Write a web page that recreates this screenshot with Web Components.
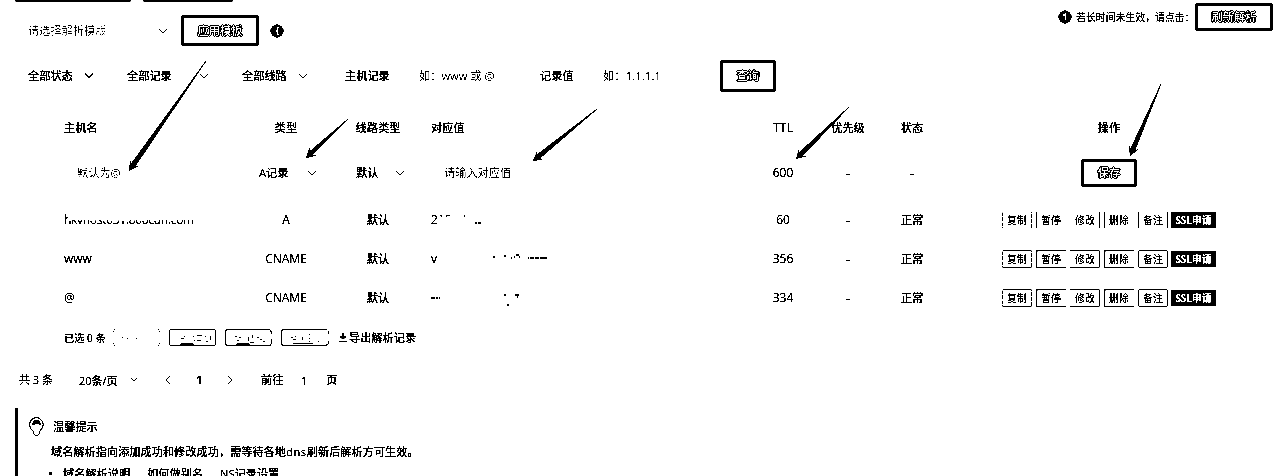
<!DOCTYPE html>
<html lang="zh-CN">
<head>
<meta charset="utf-8">
<title>域名解析</title>
<style>
html,body{margin:0;background:#fff;overflow:hidden}
body{width:1280px;height:476px;font:500 11.2px/16px "Open Sans","Noto Sans CJK SC",sans-serif;color:#000}
</style>
</head>
<body>
<dns-page></dns-page>
<script>
function define(name, html, setup) {
  customElements.define(name, class extends HTMLElement {
    connectedCallback() {
      if (this.shadowRoot) return;
      const root = this.attachShadow({mode: 'open'});
      root.innerHTML = typeof html === 'function' ? html(this) : html;
      if (setup) setup(this, root);
    }
  });
}

define('box-button', `<style>
:host{display:flex;box-sizing:border-box;align-items:center;justify-content:center;border:3px solid #000;border-radius:3px;font-size:11.2px;color:#fff;white-space:nowrap;
text-shadow:1px 0 #000,-1px 0 #000,0 1px #000,0 -1px #000}
</style><slot></slot>`);

define('chevron-icon', `<style>:host{display:block;width:10px;height:6px;flex:none}svg{display:block}:host([bold]) path{stroke-width:1.4}</style>
<svg width="10" height="6" viewBox="0 0 10 6"><path d="M1 .8 5 4.8 9 .8" fill="none" stroke="#000" stroke-width=".9"/></svg>`);

define('info-icon', e => `<style>:host{display:block;width:14px;height:14px;flex:none}svg{display:block}</style>
<svg width="14" height="14" viewBox="0 0 14 14"><circle cx="7" cy="7" r="6.5"/><path d="${e.hasAttribute('thin') ? 'M5 5h2.500v5.500M7.500 3v3' : 'M9 3.500H7.500v7H9M7.500 7H5.500'}" fill="none" stroke="#fff" stroke-width="1.700"/></svg>`);

define('tool-bar', `<style>
:host{display:flex;align-items:flex-start;height:60px;box-sizing:border-box}
.tabs{display:flex;gap:12px;padding-left:15px;height:2px}
.tabs i{background:#000;width:116px;border-radius:0 0 2px 2px}.tabs i+i{width:90px}
.left{width:1058px}
.row{display:flex;align-items:center;padding:13px 0 0 28px}
.ph{color:#868686;font-weight:400;width:130px}
chevron-icon{margin-right:13px}
.row box-button{width:78px;height:31px;margin-right:11px}
.right{display:flex;align-items:center;padding-top:3px}
.right span{font-size:9.9px;font-weight:400;margin-left:4px;width:119px;white-space:nowrap}
.right box-button{width:78px;height:28px}
</style>
<div class="left"><div class="tabs"><i></i><i></i></div>
<div class="row"><span class="ph">请选择解析模版</span><chevron-icon></chevron-icon><box-button>应用模板</box-button><info-icon></info-icon></div></div>
<div class="right"><info-icon thin></info-icon><span>若长时间未生效，请点击：</span><box-button>刷新解析</box-button></div>`);

define('filter-bar', `<style>
:host{display:grid;grid-template-columns:99px 115px 103px 74px 121px 63px 117px 56px;padding-left:28px;height:32px;align-items:center}
div{display:flex;align-items:center;gap:11px;white-space:nowrap}
.ph{color:#606060;font-weight:400}
box-button{height:32px}
</style>
<div>全部状态<chevron-icon bold></chevron-icon></div>
<div style="gap:27px">全部记录<chevron-icon></chevron-icon></div>
<div>全部线路<chevron-icon></chevron-icon></div>
<div>主机记录</div><div class="ph">如：www 或 @</div><div>记录值</div><div class="ph" style="color:#444;letter-spacing:.15px">如：1.1.1.1</div>
<box-button>查询</box-button>`);

define('table-row', `<style>
:host{display:grid;grid-template-columns:240px 92px 92px 327px 64px 66px 62px 332px;align-items:center;white-space:nowrap}
::slotted(*){text-align:center}
::slotted(:nth-child(1)){text-align:left;padding-left:64px}
::slotted(:nth-child(4)){text-align:left;padding-left:7px}
</style><slot></slot>`);

define('row-actions', `<style>
:host{display:flex;gap:4px;justify-content:center;font-size:9.9px;font-weight:400}
span{box-sizing:border-box;width:30px;height:18px;line-height:16px;border:1px solid #000;border-radius:2px}
span:nth-child(1),span:nth-child(4){border-left-color:transparent;border-radius:0 2px 2px 0}
span:nth-child(3),span:nth-child(5){border-right-color:transparent;border-radius:2px 0 0 2px}
span:nth-child(2){border-left-style:dashed;border-right-style:dashed}
:host([faint]) span{border-top-color:transparent;border-bottom-color:transparent}
b{width:45px;height:16px;line-height:16px;margin:1px 0 0 -1px;background:#000;color:#fff;border-radius:1px;-webkit-text-stroke:.3px #fff}
</style><span>复制</span><span>暂停</span><span>修改</span><span>删除</span><span>备注</span><b>SSL申请</b>`);

define('record-table', `<style>
:host{display:block;padding-top:20px}
.head{height:32px}
.edit{height:57px}
.rec{height:39.2px}
.rec:nth-of-type(3){margin-top:-1px}
.lat{font-size:12px}
.dash{font-size:13px;font-weight:600}
.ph{color:#686868;font-weight:400}
.sel{display:flex;align-items:center;justify-content:space-between}
box-button{width:56px;height:28px;margin:0 auto}
.cut{display:inline-block;letter-spacing:-.3px;clip-path:polygon(0 0,4px 0,4px 9px,100% 9px,100% 100%,0 100%)}
.top{display:inline-block;clip-path:polygon(0 0,100% 0,100% 5px,6px 5px,6px 100%,0 100%)}
svg{vertical-align:middle}
</style>
<table-row class="head"><span>主机名</span><span>类型</span><span>线路类型</span><span>对应值</span><span class="lat">TTL</span><span>优先级</span><span>状态</span><span>操作</span></table-row>
<table-row class="edit"><span class="ph"><span style="padding-left:13px">默认为@</span></span>
<div><div class="sel" style="margin:0 15px 0 19px">A记录<chevron-icon></chevron-icon></div></div>
<div><div class="sel" style="margin:0 19px 0 24px">默认<chevron-icon></chevron-icon></div></div>
<span class="ph"><span style="padding-left:13px">请输入对应值</span></span><span class="lat">600</span><span class="dash">-</span><span class="dash">-</span><div><box-button>保存</box-button></div></table-row>
<table-row class="rec"><span class="lat"><span class="cut">hkvhost031.800cdn.com</span></span><span class="lat">A</span><span>默认</span><span class="lat"><span class="top">210</span><svg width="32" height="12"><path d="M12 2h1M23 9h2M26 9h3" stroke="#000" stroke-width="2"/></svg></span><span class="lat">60</span><span class="dash">-</span><span>正常</span><row-actions faint></row-actions></table-row>
<table-row class="rec"><span class="lat">www</span><span class="lat">CNAME</span><span>默认</span><span class="lat">v<svg width="120" height="12"><path d="M56 3h2M67 2h2M74 4h1M77 3h1M79 1h3M82 3h1M91 4h1M93 4h4M98 4h4M103 4h7" stroke="#000" stroke-width="2"/></svg></span><span class="lat">356</span><span class="dash">-</span><span>正常</span><row-actions></row-actions></table-row>
<table-row class="rec"><span class="lat">@</span><span class="lat">CNAME</span><span>默认</span><span><svg width="100" height="14"><path d="M0 6h4M5 6h2M8 6h1M73 3h2M84 3h4M86 5h1M76 13h2" stroke="#000" stroke-width="2"/></svg></span><span class="lat">334</span><span class="dash">-</span><span>正常</span><row-actions></row-actions></table-row>`);

define('batch-bar', `<style>
:host{display:flex;align-items:center;height:40px;padding-left:64px;box-sizing:border-box}
.n{font-size:10.2px;width:49px;white-space:nowrap}
svg{display:block;margin-right:8px}
.dl{margin:0 2px 0 2px}
</style><span class="n">已选 0 条</span>
<svg width="48" height="18" fill="none" stroke="#000" shape-rendering="crispEdges"><path d="M0 2.500h1M1 .500h1M45 .500h1M46 2.500h1M0 14.500h1M1 16.500h1M45 16.500h1M46 14.500h1M9 8.500h1M14 9.500h1M23 9.500h1"/></svg>
<svg width="48" height="18" fill="none" stroke="#000" shape-rendering="crispEdges"><rect x=".5" y=".5" width="46" height="16" rx="2"/><path d="M12 9.500h3M15 7.500h1M24 7.500h1M25 11.500h1M28 6.500h5M28 11.500h4M36 7.500h1M41 6.500v4M37 12.500h2M11 15.500h14M12 14.500h12"/></svg>
<svg width="48" height="18" fill="none" stroke="#000" shape-rendering="crispEdges"><path d="M46.500 5V3l-2-2.500H2L.500 2v13L2 16.500h43l1.500-2V10"/><path d="M10 7.500h2M14 8.500h2M12 11.500h2M23 7.500v4M27 5.500v3M32 8.500h2M35 10.500h2M38 12.500h2M25 13.500h4M11 15.500h14M12 14.500h12"/></svg>
<svg width="48" height="18" fill="none" stroke="#000" shape-rendering="crispEdges"><path d="M47.500 5V2M46 .5H2L.500 2v13L2 16.500h43l2.500-2V12"/><path d="M10 8.500h2M14 7.500h1M12 10.500h3M21 7.500v3M28 4.500v1M28 8.500v1M28 12.500h1M37 12.500h1M12 14.500h4M16 14.500h16"/></svg>
<svg class="dl" width="8" height="10" fill="none" stroke="#000"><path d="M4 0v6M1.500 3.500 4 6l2.500-2.500M0 8.500h8" stroke-width="1.200"/></svg>
<span>导出解析记录</span>`);

define('page-nav', `<style>
:host{display:grid;grid-template-columns:60px 52px 34px 31px 31px 34px 40px 25px 20px;align-items:center;height:44px;padding-left:19px;white-space:nowrap}
svg{display:block}
</style><span style="font-size:11px">共 3 条</span><span style="padding-top:2px;font-size:11px">20条/页</span>
<svg width="6" height="4"><path d="M.5.5 3 3 5.500.5" fill="none" stroke="#000" stroke-width=".9"/></svg>
<svg width="6" height="8"><path d="M4.500.5 1 4l3.500 3.500" fill="none" stroke="#000"/></svg>
<b>1</b><svg width="6" height="8"><path d="M1.500.5 5 4 1.500 7.500" fill="none" stroke="#000"/></svg>
<span>前往</span><span style="padding-top:2px">1</span><span>页</span>`);

define('tip-panel', `<style>
:host{display:block;box-sizing:border-box;margin:6px 0 0 15px;border-left:3px solid #000;height:69px;overflow:hidden;padding-top:8px}
h4{font:inherit;margin:0;display:flex;align-items:center;gap:9px;padding-left:11px;height:22px}
p{margin:6px 0 0 33px}
p i{font-style:normal;letter-spacing:.6px}
ul{display:flex;align-items:center;margin:6px 0 0 31px;padding:0;list-style:none;white-space:nowrap}
li{margin-right:17px}
.dot{width:3px;height:3px;border-radius:1px;background:#000;margin-right:11px}
</style>
<h4><svg width="15" height="20" viewBox="0 0 15 20" fill="none" stroke="#000"><path d="M4.500 16.500V14C1.800 12.500.7 10 .7 7.300a6.700 6.700 0 0 1 13.400 0c0 2.700-1 5-3.600 6.700v2.500L8.500 18.800h-2z" stroke-width=".8"/><path d="M3.500 8c0-6 8-6 8 0L10 7l-2-1-2 1z" fill="#000"/></svg>温馨提示</h4>
<p>域名解析指向添加成功和修改成功，需等待各地<i>dns</i>刷新后解析方可生效。</p>
<ul><li class="dot"></li><li>域名解析说明</li><li>如何做别名</li><li>NS记录设置</li></ul>`);

define('pointer-arrows', `<style>:host{position:absolute;left:0;top:0;pointer-events:none}svg{display:block}</style><svg width="1280" height="200"></svg>`, (el, root) => {
  const arrows = [[206,61,129,171],[348,119,306,158],[597,109,533,161],[849,107,796,159],[1161,84,1130,156]];
  root.querySelector('svg').innerHTML = arrows.map(([x0,y0,x1,y1]) => {
    const d = Math.hypot(x1-x0, y1-y0), ux = (x0-x1)/d, uy = (y0-y1)/d;
    const p = (a, b) => `${(x1+ux*a-uy*b).toFixed(1)},${(y1+uy*a+ux*b).toFixed(1)}`;
    return `<polygon points="${p(0,0)} ${p(10,5.5)} ${p(7,2.5)} ${p(d,.3)} ${p(d,-.3)} ${p(7,-2.5)} ${p(10,-5.5)}"/>`;
  }).join('');
});

define('dns-page', `<style>
:host{display:block;position:relative;width:1280px;height:476px;overflow:hidden;background:#fff;filter:grayscale(1) brightness(.76) contrast(40)}
</style>
<tool-bar></tool-bar><filter-bar></filter-bar><record-table></record-table><batch-bar></batch-bar><page-nav></page-nav><tip-panel></tip-panel><pointer-arrows></pointer-arrows>`);
</script>
</body>
</html>
